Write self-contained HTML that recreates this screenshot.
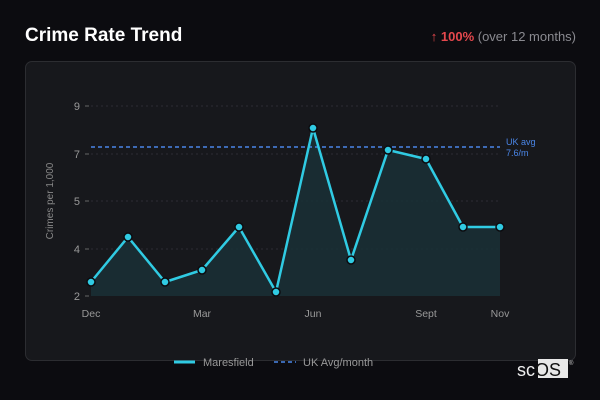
<!DOCTYPE html>
<html><head><meta charset="utf-8"><style>
html,body{margin:0;padding:0;width:600px;height:400px;background:#0c0c10;overflow:hidden;font-family:"Liberation Sans","DejaVu Sans",sans-serif}
.t{position:absolute;left:25px;top:25px;color:#fff;font-weight:bold;font-size:19px;font-family:"Liberation Sans",sans-serif}
.r{position:absolute;right:24px;top:29px;font-size:13px;color:#8a8a90}
.r b{color:#e5484d}
.card{position:absolute;left:25px;top:61px;width:549px;height:298px;background:#17181c;border:1px solid #2c2d31;border-radius:7px}
svg{position:absolute;left:0;top:0}
</style></head><body>
<div class="t">Crime Rate Trend</div>
<div class="r"><span style="color:#e5484d">↑</span> <b>100%</b> (over 12 months)</div>
<div class="card"></div>
<svg width="600" height="400" font-family="Liberation Sans, DejaVu Sans, sans-serif">
<g stroke="#2c2d33" stroke-dasharray="2,3" stroke-width="1">
<line x1="91" x2="500" y1="106" y2="106"/><line x1="91" x2="500" y1="154" y2="154"/><line x1="91" x2="500" y1="201" y2="201"/><line x1="91" x2="500" y1="249" y2="249"/>
</g>
<g stroke="#666" stroke-width="1"><line x1="85" x2="89" y1="106" y2="106"/><line x1="85" x2="89" y1="154" y2="154"/><line x1="85" x2="89" y1="201" y2="201"/><line x1="85" x2="89" y1="249" y2="249"/><line x1="85" x2="89" y1="296" y2="296"/></g>
<g fill="#999" font-size="11" text-anchor="end"><text x="80" y="110">9</text><text x="80" y="158">7</text><text x="80" y="205">5</text><text x="80" y="253">4</text><text x="80" y="300">2</text></g>
<text transform="translate(53,201) rotate(-90)" fill="#888" font-size="10" text-anchor="middle">Crimes per 1,000</text>
<g fill="#999" font-size="10.5" text-anchor="middle"><text x="91" y="317">Dec</text><text x="202" y="317">Mar</text><text x="313" y="317">Jun</text><text x="426" y="317">Sept</text><text x="500" y="317">Nov</text></g>
<polygon fill="#1a3036" fill-opacity="0.85" points="91,296 91,282 128,237 165,282 202,270 239,227 276,292 313,128 351,260 388,150 426,159 463,227 500,227 500,296"/>
<line x1="91" x2="500" y1="147" y2="147" stroke="#4a86e8" stroke-width="1.5" stroke-dasharray="4,3"/>
<text x="506" y="145" fill="#4a86e8" font-size="9">UK avg</text><text x="506" y="156" fill="#4a86e8" font-size="9">7.6/m</text>
<polyline fill="none" stroke="#30cbe3" stroke-width="2.5" stroke-linejoin="round" points="91,282 128,237 165,282 202,270 239,227 276,292 313,128 351,260 388,150 426,159 463,227 500,227"/>
<g fill="#30cbe3" stroke="#0c0c10" stroke-width="1.5">
<circle cx="91" cy="282" r="4"/><circle cx="128" cy="237" r="4"/><circle cx="165" cy="282" r="4"/><circle cx="202" cy="270" r="4"/><circle cx="239" cy="227" r="4"/><circle cx="276" cy="292" r="4"/><circle cx="313" cy="128" r="4"/><circle cx="351" cy="260" r="4"/><circle cx="388" cy="150" r="4"/><circle cx="426" cy="159" r="4"/><circle cx="463" cy="227" r="4"/><circle cx="500" cy="227" r="4"/>
</g>
<line x1="174" x2="195" y1="362" y2="362" stroke="#30cbe3" stroke-width="3"/>
<text x="203" y="366" fill="#999" font-size="11">Maresfield</text>
<line x1="274" x2="296" y1="362" y2="362" stroke="#4a86e8" stroke-width="1.5" stroke-dasharray="4,3"/>
<text x="303" y="366" fill="#999" font-size="11">UK Avg/month</text>
<rect x="538" y="359" width="30" height="19" fill="#e8e8e8"/>
<text x="517" y="376" fill="#eee" font-size="18">sc<tspan fill="#111">OS</tspan></text>
<text x="569" y="365" fill="#ccc" font-size="6">®</text>
</svg>
</body></html>
